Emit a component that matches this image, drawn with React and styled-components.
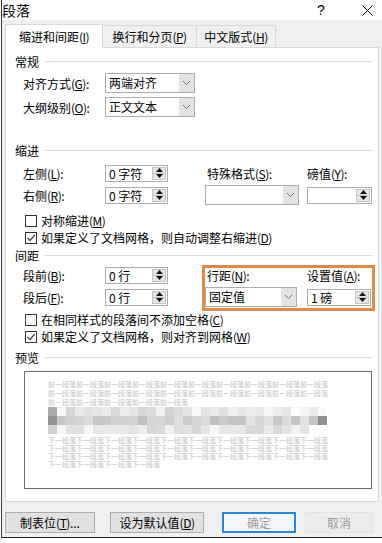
import React from 'react';
import styled, { createGlobalStyle } from 'styled-components';

const GlobalStyle = createGlobalStyle`
  html, body {
    margin: 0;
    padding: 0;
    background: #fff;
  }
  body {
    font-family: "Noto Sans CJK SC", "Liberation Sans", sans-serif;
    font-size: 12px;
    color: #000;
  }
  * {
    box-sizing: border-box;
  }
`;

const PREV_LINES = ['前一段落'.repeat(10), '前一段落'.repeat(10), '前一段落'.repeat(5)];
const NEXT_LINES = ['下一段落'.repeat(10), '下一段落'.repeat(10), '下一段落'.repeat(10), '下一段落'.repeat(4)];

// pixelated stand-in for the blurred sample paragraph
const mosaic = [0, 1, 2].map((row) =>
  Array.from({ length: row === 2 ? 29 : 31 }, (_, i) => {
    const n = (Math.sin(i * 12.9898 + row * 78.233) * 43758.5453) % 1;
    const r = Math.abs(n);
    let base = row === 1 ? 190 : 212;
    if (i === 0) base = row === 1 ? 140 : 170;
    if (i === 30 && row === 1) base = 130;
    const v = Math.round(base + r * 38);
    return `rgb(${v},${v},${v})`;
  })
);

function Chevron() {
  return (
    <svg width="9" height="6" viewBox="0 0 9 6">
      <path d="M1 1 L4.5 4.5 L8 1" fill="none" stroke="#6a6a6a" strokeWidth="1" />
    </svg>
  );
}

function Select({ value, width }) {
  return (
    <SelectBox $width={width}>
      <SelectValue>{value}</SelectValue>
      <SelectButton>
        <Chevron />
      </SelectButton>
    </SelectBox>
  );
}

function Spin({ value, width }) {
  return (
    <SpinBox $width={width}>
      <SpinValue>{value}</SpinValue>
      <SpinArrows>
        <SpinHalf>
          <svg width="7" height="4" viewBox="0 0 7 4">
            <polygon points="0,4 3.5,0 7,4" fill="#111" />
          </svg>
        </SpinHalf>
        <SpinHalf>
          <svg width="7" height="4" viewBox="0 0 7 4">
            <polygon points="0,0 7,0 3.5,4" fill="#111" />
          </svg>
        </SpinHalf>
      </SpinArrows>
    </SpinBox>
  );
}

function Check({ checked, children }) {
  return (
    <CheckRow>
      <CheckBox>
        {checked && (
          <svg width="10" height="10" viewBox="0 0 10 10">
            <path d="M1.5 5 L4 7.5 L8.8 2" fill="none" stroke="#444" strokeWidth="1.2" />
          </svg>
        )}
      </CheckBox>
      <span>{children}</span>
    </CheckRow>
  );
}

function Acc({ children }) {
  return (
    <Paren>
      (<u>{children}</u>)
    </Paren>
  );
}

export default function App() {
  return (
    <>
      <GlobalStyle />
      <Window>
        <TitleBar>
          <Title>段落</Title>
          <TitleButton $mr={16}>?</TitleButton>
          <TitleButton>
            <svg width="11" height="11" viewBox="0 0 11 11">
              <path d="M0.5 0.5 L10.5 10.5 M10.5 0.5 L0.5 10.5" stroke="#111" strokeWidth="1" />
            </svg>
          </TitleButton>
        </TitleBar>

        <Body>
          <TabStrip>
            <Tab $active $width={98}>
              缩进和间距<Acc>I</Acc>
            </Tab>
            <Tab $width={95}>
              换行和分页<Acc>P</Acc>
            </Tab>
            <Tab $width={80}>
              中文版式<Acc>H</Acc>
            </Tab>
          </TabStrip>

          <Panel>
            <GroupHeader>常规</GroupHeader>
            <Fields $mt={4}>
              <LeftGrid $rowGap={4}>
                <Label>
                  对齐方式<Acc>G</Acc>:
                </Label>
                <Select value="两端对齐" width={90} />
                <Label>
                  大纲级别<Acc>O</Acc>:
                </Label>
                <Select value="正文文本" width={90} />
              </LeftGrid>
            </Fields>

            <GroupHeader $mt={25}>缩进</GroupHeader>
            <Fields $mt={5}>
              <LeftGrid $rowGap={2}>
                <Label>
                  左侧<Acc>L</Acc>:
                </Label>
                <Spin value="0 字符" width={63} />
                <Label>
                  右侧<Acc>R</Acc>:
                </Label>
                <Spin value="0 字符" width={63} />
              </LeftGrid>
              <RightGrid>
                <Label $indent={2}>
                  特殊格式<Acc>S</Acc>:
                </Label>
                <Label>
                  磅值<Acc>Y</Acc>:
                </Label>
                <Select value="" width={94} />
                <Spin value="" width={65} />
              </RightGrid>
            </Fields>

            <CheckList $mt={7}>
              <Check>
                对称缩进<Acc>M</Acc>
              </Check>
              <Check checked>
                如果定义了文档网格，则自动调整右缩进<Acc>D</Acc>
              </Check>
            </CheckList>

            <GroupHeader $mt={1}>间距</GroupHeader>
            <Fields $mt={2}>
              <LeftGrid $rowGap={2}>
                <Label>
                  段前<Acc>B</Acc>:
                </Label>
                <Spin value="0 行" width={63} />
                <Label>
                  段后<Acc>F</Acc>:
                </Label>
                <Spin value="0 行" width={63} />
              </LeftGrid>
              <RightGrid $marked>
                <Label $indent={2}>
                  行距<Acc>N</Acc>:
                </Label>
                <Label>
                  设置值<Acc>A</Acc>:
                </Label>
                <Select value="固定值" width={92} />
                <Spin value="1 磅" width={64} />
              </RightGrid>
            </Fields>

            <CheckList $mt={4}>
              <Check>
                在相同样式的段落间不添加空格<Acc>C</Acc>
              </Check>
              <Check checked>
                如果定义了文档网格，则对齐到网格<Acc>W</Acc>
              </Check>
            </CheckList>

            <GroupHeader $mt={4}>预览</GroupHeader>
            <Preview>
              {PREV_LINES.map((t, i) => (
                <PreviewLine key={`p${i}`}>{t}</PreviewLine>
              ))}
              <Mosaic>
                {mosaic.map((row, r) => (
                  <MosaicRow key={r}>
                    {row.map((c, i) => (
                      <MosaicCell key={i} style={{ background: c }} />
                    ))}
                  </MosaicRow>
                ))}
              </Mosaic>
              {NEXT_LINES.map((t, i) => (
                <PreviewLine key={`n${i}`} $next>
                  {t}
                </PreviewLine>
              ))}
            </Preview>
          </Panel>

          <Footer>
            <Button $width={90}>
              制表位<Acc>T</Acc>...
            </Button>
            <Button $width={94} $ml={15}>
              设为默认值<Acc>D</Acc>
            </Button>
            <Button $width={74} $ml={18} $variant="default">
              确定
            </Button>
            <Button $width={68} $ml={9} $variant="faded">
              取消
            </Button>
          </Footer>
        </Body>
      </Window>
    </>
  );
}

const Window = styled.div`
  width: 381px;
  height: 538px;
  margin-left: 1px;
  border-left: 1px solid #3a3a3a;
  border-bottom: 1px solid #222;
  display: flex;
  flex-direction: column;
  background: #f0f0f0;
`;

const TitleBar = styled.div`
  height: 20px;
  background: #fff;
  display: flex;
  align-items: center;
`;

const Title = styled.div`
  flex: 1;
  font-size: 14px;
  line-height: 18px;
`;

const TitleButton = styled.div`
  width: 30px;
  height: 20px;
  margin-right: ${(p) => p.$mr || 0}px;
  display: flex;
  align-items: center;
  justify-content: center;
  font-family: "Liberation Sans", sans-serif;
  font-size: 14px;
`;

const Body = styled.div`
  flex: 1;
  padding: 4px 3px 0 3px;
  display: flex;
  flex-direction: column;
`;

const TabStrip = styled.div`
  height: 23px;
  display: flex;
  align-items: flex-end;
`;

const Tab = styled.div`
  position: relative;
  z-index: ${(p) => (p.$active ? 1 : 0)};
  width: ${(p) => p.$width}px;
  height: ${(p) => (p.$active ? 24 : 22)}px;
  margin-bottom: ${(p) => (p.$active ? -1 : 0)}px;
  margin-left: ${(p) => (p.$active ? 0 : -1)}px;
  background: ${(p) => (p.$active ? '#fff' : '#f0f0f0')};
  border: 1px solid #d9d9d9;
  border-bottom: none;
  display: flex;
  align-items: center;
  justify-content: center;
  font-size: 12px;
  white-space: nowrap;
`;

const Paren = styled.span`
  letter-spacing: -0.5px;
`;

const Panel = styled.div`
  width: 374px;
  height: 455px;
  background: #fff;
  border: 1px solid #d9d9d9;
  padding: 5px 5px 0 9px;
`;

const GroupHeader = styled.div`
  margin-top: ${(p) => p.$mt || 0}px;
  height: 16px;
  display: flex;
  align-items: center;
  gap: 6px;
  font-size: 12px;

  &::after {
    content: '';
    flex: 1;
    height: 1px;
    background: #dcdcdc;
  }
`;

const Fields = styled.div`
  margin: ${(p) => p.$mt}px 0 0 8px;
  display: flex;
`;

const LeftGrid = styled.div`
  display: grid;
  grid-template-columns: 82px 100px;
  grid-auto-rows: 20px;
  row-gap: ${(p) => p.$rowGap}px;
  align-items: center;
`;

const RightGrid = styled.div`
  position: relative;
  display: grid;
  grid-template-columns: 102px 66px;
  grid-auto-rows: 20px;
  row-gap: 2px;
  align-items: center;

  &::after {
    content: '';
    display: ${(p) => (p.$marked ? 'block' : 'none')};
    position: absolute;
    top: 0;
    left: -3px;
    right: -2px;
    bottom: -4px;
    border: 3px solid #df8a4a;
    pointer-events: none;
  }
`;

const Label = styled.div`
  padding-left: ${(p) => p.$indent || 0}px;
  font-size: 12px;
  white-space: nowrap;
`;

const SelectBox = styled.div`
  width: ${(p) => p.$width}px;
  height: 20px;
  border: 1px solid #adadad;
  background: #fff;
  display: flex;
`;

const SelectValue = styled.div`
  flex: 1;
  padding-left: 3px;
  line-height: 18px;
  font-size: 12px;
`;

const SelectButton = styled.div`
  width: 15px;
  background: #e3e3e3;
  display: flex;
  align-items: center;
  justify-content: center;
`;

const SpinBox = styled.div`
  width: ${(p) => p.$width}px;
  height: 17px;
  border: 1px solid #adadad;
  background: #fff;
  display: flex;
`;

const SpinValue = styled.div`
  flex: 1;
  padding-left: 3px;
  line-height: 15px;
  font-size: 12px;
  white-space: nowrap;
`;

const SpinArrows = styled.div`
  width: 14px;
  margin: 1px 1px 1px 0;
  background: #e6e6e6;
  border: 1px solid #c4c4c4;
  display: flex;
  flex-direction: column;
`;

const SpinHalf = styled.div`
  flex: 1;
  display: flex;
  align-items: center;
  justify-content: center;

  & + & {
    border-top: 1px solid #c4c4c4;
  }
`;

const CheckList = styled.div`
  margin: ${(p) => p.$mt}px 0 0 10px;
  display: flex;
  flex-direction: column;
`;

const CheckRow = styled.div`
  height: 17px;
  display: flex;
  align-items: center;
  gap: 4px;
  font-size: 12px;
  white-space: nowrap;
`;

const CheckBox = styled.div`
  width: 12px;
  height: 12px;
  border: 1px solid #333;
  background: #fff;
  display: flex;
  align-items: center;
  justify-content: center;
`;

const Preview = styled.div`
  margin: 6px 0 0 9px;
  width: 348px;
  height: 118px;
  border: 1px solid #6a6a6a;
  padding: 8px 0 0 23px;
  overflow: hidden;
`;

const PreviewLine = styled.div`
  width: 282px;
  height: ${(p) => (p.$next ? 8 : 9)}px;
  line-height: ${(p) => (p.$next ? 8 : 9)}px;
  font-size: 7px;
  color: #c2c2c2;
  white-space: nowrap;
  overflow: hidden;
`;

const Mosaic = styled.div`
  margin: 0 0 2px;
  display: flex;
  flex-direction: column;
`;

const MosaicRow = styled.div`
  display: flex;
  height: 9px;
`;

const MosaicCell = styled.div`
  width: 9px;
  height: 9px;
`;

const Footer = styled.div`
  padding-top: 10px;
  display: flex;
`;

const Button = styled.div`
  width: ${(p) => p.$width}px;
  height: 21px;
  margin-left: ${(p) => p.$ml || 0}px;
  display: flex;
  align-items: center;
  justify-content: center;
  font-size: 12px;
  white-space: nowrap;
  background: ${(p) =>
    p.$variant === 'default' ? '#f3f6f9' : p.$variant === 'faded' ? '#ececec' : '#e1e1e1'};
  border: ${(p) =>
    p.$variant === 'default'
      ? '2px solid #2b86d6'
      : p.$variant === 'faded'
        ? '1px solid #e4e4e4'
        : '1px solid #adadad'};
  color: ${(p) => (p.$variant ? '#9a9a9a' : '#000')};
`;
